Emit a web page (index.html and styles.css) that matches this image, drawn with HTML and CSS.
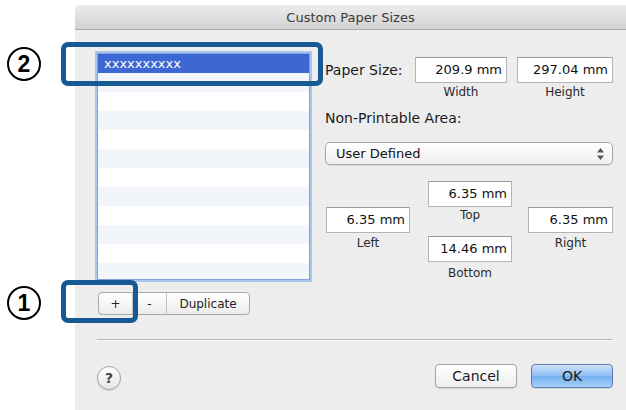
FILE: index.html
```html
<!DOCTYPE html>
<html lang="en">

<head>
  <meta charset="UTF-8">
  <meta name="viewport" content="width=device-width, initial-scale=1.0">
  <title>Custom Paper Sizes</title>
  <link rel="stylesheet" href="styles.css">
</head>

<body>
  <div class="window">
    <div class="titlebar">Custom Paper Sizes</div>

    <div class="content">
      <div class="left">
        <ul class="paper-list">
          <li class="selected">xxxxxxxxxx</li>
          <li></li>
          <li></li>
          <li></li>
          <li></li>
          <li></li>
          <li></li>
          <li></li>
          <li></li>
          <li></li>
          <li></li>
          <li></li>
        </ul>
        <div class="segmented">
          <button class="seg seg-plus">+</button>
          <button class="seg seg-minus">-</button>
          <button class="seg seg-dup">Duplicate</button>
        </div>
      </div>

      <div class="right">
        <div class="size-row">
          <span class="label">Paper Size:</span>
          <div class="field-group width-92">
            <div class="field">209.9 mm</div>
            <div class="caption">Width</div>
          </div>
          <div class="field-group width-96">
            <div class="field">297.04 mm</div>
            <div class="caption">Height</div>
          </div>
        </div>

        <div class="section-label">Non-Printable Area:</div>

        <div class="popup">
          <span>User Defined</span>
          <svg class="stepper" width="7" height="12" viewBox="0 0 7 12">
            <path d="M3.5 0 L7 4.5 L0 4.5 Z" fill="#555"/>
            <path d="M0 7.5 L7 7.5 L3.5 12 Z" fill="#555"/>
          </svg>
        </div>

        <div class="margins">
          <div class="margin-col side">
            <div class="field">6.35 mm</div>
            <div class="caption">Left</div>
          </div>
          <div class="margin-col middle">
            <div class="field">6.35 mm</div>
            <div class="caption caption-top">Top</div>
            <div class="field field-bottom">14.46 mm</div>
            <div class="caption caption-bottom">Bottom</div>
          </div>
          <div class="margin-col side right-col">
            <div class="field">6.35 mm</div>
            <div class="caption">Right</div>
          </div>
        </div>
      </div>
    </div>

    <div class="separator"></div>

    <div class="footer">
      <button class="help">?</button>
      <div class="footer-buttons">
        <button class="push">Cancel</button>
        <button class="push push-default">OK</button>
      </div>
    </div>
  </div>

  <!-- step markers drawn over the screenshot -->
  <div class="step step-2">2</div>
  <div class="callout callout-2"></div>
  <div class="step step-1">1</div>
  <div class="callout callout-1"></div>
</body>

</html>
```

FILE: styles.css
```css
body {
  margin: 0;
  background-color: #fff;
  font-family: 'DejaVu Sans', 'Liberation Sans', sans-serif;
  color: #1a1a1a;
  position: relative;
  width: 626px;
  height: 410px;
  overflow: hidden;
}

.window {
  margin: 5px 0 0 75px;
  width: 551px;
  height: 405px;
  background-color: #ededed;
  border-radius: 5px 0 0 0;
  box-sizing: border-box;
}

.titlebar {
  height: 25px;
  line-height: 25px;
  text-align: center;
  font-size: 13px;
  color: #3a3a3a;
  background: linear-gradient(#ececec, #d2d2d2);
  border-bottom: 1px solid #a9a9a9;
  border-radius: 5px 0 0 0;
  box-sizing: border-box;
}

.content {
  display: flex;
  gap: 15px;
  padding: 23px 13px 0 22px;
}

.left {
  width: 213px;
}

.paper-list {
  list-style: none;
  margin: 0;
  padding: 0;
  height: 227px;
  overflow: hidden;
  background-color: #fff;
  border: 1px solid #7ea3d8;
  box-shadow: 0 0 0 2px #a9c6ee;
  box-sizing: border-box;
}

.paper-list li {
  height: 19px;
  line-height: 19px;
  padding-left: 6px;
  font-size: 13px;
}

.paper-list li:nth-child(even) {
  background-color: #f2f5fa;
}

.paper-list li.selected {
  background-color: #3d68d4;
  color: #fff;
}

.segmented {
  display: flex;
  margin: 12px 0 0 1px;
  width: 152px;
  height: 23px;
  border: 1px solid #a8a8a8;
  border-radius: 4px;
  background: linear-gradient(#ffffff, #ececec);
  box-sizing: border-box;
  overflow: hidden;
}

.seg {
  border: 0;
  background: transparent;
  font-family: 'DejaVu Sans', sans-serif;
  font-size: 12px;
  color: #222;
  padding: 0;
  height: 21px;
  border-right: 1px solid #c2c2c2;
}

.seg-plus,
.seg-minus {
  width: 34px;
}

.seg-dup {
  flex: 1;
  border-right: 0;
}

.right {
  width: 288px;
}

.size-row {
  display: flex;
  align-items: flex-start;
  gap: 10px;
  margin-top: 4px;
}

.label {
  width: 80px;
  line-height: 26px;
  font-size: 14px;
}

.width-92 {
  width: 92px;
}

.width-96 {
  width: 96px;
}

.field {
  height: 26px;
  line-height: 24px;
  background-color: #fff;
  border: 1px solid #b4b4b4;
  border-top-color: #9a9a9a;
  box-sizing: border-box;
  text-align: right;
  padding-right: 4px;
  font-size: 13px;
  color: #111;
}

.caption {
  margin-top: 2px;
  line-height: 14px;
  font-size: 12px;
  text-align: center;
  color: #2a2a2a;
}

.section-label {
  margin-top: 11px;
  line-height: 17px;
  font-size: 14px;
}

.popup {
  display: flex;
  align-items: center;
  justify-content: space-between;
  margin-top: 15px;
  height: 23px;
  padding: 0 8px 0 10px;
  background: linear-gradient(#ffffff, #efefef);
  border: 1px solid #a6a6a6;
  border-radius: 5px;
  box-shadow: 0 1px 1px rgba(0, 0, 0, 0.08);
  box-sizing: border-box;
  font-size: 13px;
  color: #111;
}

.margins {
  display: flex;
  align-items: flex-start;
  margin: 16px 0 0 1px;
  gap: 18px;
}

.margin-col {
  width: 84px;
}

.margin-col.side {
  margin-top: 26px;
}

.margin-col.side .caption {
  margin-top: 3px;
}

.right-col {
  width: 85px;
  margin-left: -2px;
}

.caption-top {
  margin-top: 1px;
}

.field-bottom {
  margin-top: 14px;
}

.caption-bottom {
  margin-top: 4px;
}

.separator {
  margin: 24px 14px 0 22px;
  height: 1px;
  background-color: #b6b6b6;
  border-bottom: 1px solid #f8f8f8;
}

.footer {
  display: flex;
  justify-content: space-between;
  align-items: flex-start;
  margin-top: 23px;
  padding: 0 13px 0 22px;
}

.help {
  margin-top: 2px;
  width: 24px;
  height: 24px;
  padding: 0;
  border-radius: 50%;
  border: 1px solid #a0a0a0;
  background: linear-gradient(#ffffff, #e6e6e6);
  box-shadow: 0 1px 1px rgba(0, 0, 0, 0.12);
  font-family: 'DejaVu Sans', sans-serif;
  font-weight: bold;
  font-size: 14px;
  color: #444;
}

.footer-buttons {
  display: flex;
  gap: 14px;
}

.push {
  width: 82px;
  height: 24px;
  padding: 0;
  border: 1px solid #a3a3a3;
  border-radius: 4px;
  background: linear-gradient(#ffffff, #eeeeee);
  box-shadow: 0 1px 1px rgba(0, 0, 0, 0.1);
  font-family: 'DejaVu Sans', sans-serif;
  font-size: 14px;
  color: #1a1a1a;
}

.push-default {
  border-color: #5a7fb8;
  background: linear-gradient(#cfe3fa, #8cbcf3 50%, #74aef0 51%, #a6d0f8);
}

/* annotation overlays */
.step {
  position: absolute;
  left: 7px;
  width: 30px;
  height: 30px;
  border: 2px solid #000;
  border-radius: 50%;
  text-align: center;
  line-height: 30px;
  font-family: 'Liberation Sans', sans-serif;
  font-weight: bold;
  font-size: 23px;
  color: #000;
}

.step-2 {
  top: 47px;
}

.step-1 {
  top: 286px;
}

.callout {
  position: absolute;
  border: 5px solid #175a93;
  border-radius: 7px;
  box-sizing: border-box;
}

.callout-2 {
  left: 61px;
  top: 42px;
  width: 262px;
  height: 44px;
}

.callout-1 {
  left: 61px;
  top: 280px;
  width: 77px;
  height: 43px;
}
```
